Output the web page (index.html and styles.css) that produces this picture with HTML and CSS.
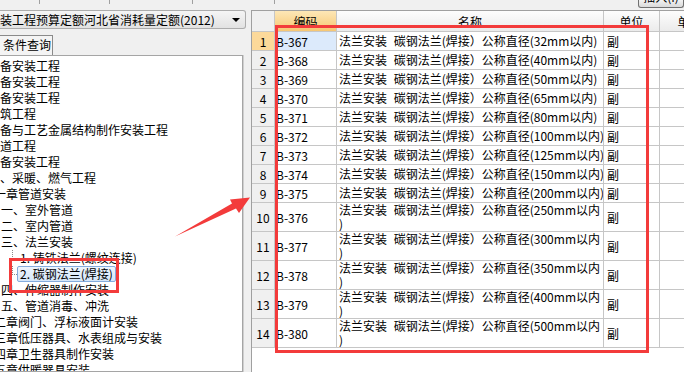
FILE: index.html
```html
<!DOCTYPE html>
<html lang="zh-CN">
<head>
<meta charset="UTF-8">
<title>定额查询</title>
<link rel="stylesheet" href="styles.css">
</head>
<body>
<div class="app">
    <div class="side">
        <div class="side-top">
            <i class="sep sep1"></i><i class="sep sep2"></i><i class="sep sep3"></i>
        </div>
        <div class="combo">
            <span class="combo-text">装工程预算定额河北省消耗量定额(2012)</span>
            <span class="combo-arrow"></span>
        </div>
        <div class="tabs"><span class="tab">条件查询</span></div>
        <div class="tree">
            <div class="node n0">备安装工程</div>
            <div class="node n0">备安装工程</div>
            <div class="node n0">备安装工程</div>
            <div class="node n0">筑工程</div>
            <div class="node n0">备与工艺金属结构制作安装工程</div>
            <div class="node n0">道工程</div>
            <div class="node n0">备安装工程</div>
            <div class="node n0">、采暖、燃气工程</div>
            <div class="node n1">一章管道安装</div>
            <div class="node n2">一、室外管道</div>
            <div class="node n2">二、室内管道</div>
            <div class="node n2">三、法兰安装</div>
            <div class="node n3"><span class="twig"></span><span class="label">1. 铸铁法兰(螺纹连接)</span></div>
            <div class="node n3"><span class="twig"></span><span class="label selected">2. 碳钢法兰(焊接)</span></div>
            <div class="node n2">四、伸缩器制作安装</div>
            <div class="node n2">五、管道消毒、冲洗</div>
            <div class="node n1">二章阀门、浮标液面计安装</div>
            <div class="node n1">三章低压器具、水表组成与安装</div>
            <div class="node n1">四章卫生器具制作安装</div>
            <div class="node n1">五章供暖器具安装</div>
        </div>
    </div>
    <div class="splitter"></div>
    <div class="main">
        <div class="main-top">
            <i class="sep"></i>
            <span class="insert-btn"><span>插入(I)</span></span>
        </div>
        <div class="grid">
            <div class="row head">
                <div class="c num"></div>
                <div class="c active">编码</div>
                <div class="c">名称</div>
                <div class="c">单位</div>
                <div class="c">单价</div>
            </div>
            <div class="row cur">
                <div class="c num">1</div><div class="c code">B-367</div>
                <div class="c name">法兰安装 碳钢法兰(焊接）公称直径(32mm以内)</div>
                <div class="c unit">副</div><div class="c"></div>
            </div>
            <div class="row">
                <div class="c num">2</div><div class="c code">B-368</div>
                <div class="c name">法兰安装 碳钢法兰(焊接）公称直径(40mm以内)</div>
                <div class="c unit">副</div><div class="c"></div>
            </div>
            <div class="row">
                <div class="c num">3</div><div class="c code">B-369</div>
                <div class="c name">法兰安装 碳钢法兰(焊接）公称直径(50mm以内)</div>
                <div class="c unit">副</div><div class="c"></div>
            </div>
            <div class="row">
                <div class="c num">4</div><div class="c code">B-370</div>
                <div class="c name">法兰安装 碳钢法兰(焊接）公称直径(65mm以内)</div>
                <div class="c unit">副</div><div class="c"></div>
            </div>
            <div class="row">
                <div class="c num">5</div><div class="c code">B-371</div>
                <div class="c name">法兰安装 碳钢法兰(焊接）公称直径(80mm以内)</div>
                <div class="c unit">副</div><div class="c"></div>
            </div>
            <div class="row">
                <div class="c num">6</div><div class="c code">B-372</div>
                <div class="c name">法兰安装 碳钢法兰(焊接）公称直径(100mm以内)</div>
                <div class="c unit">副</div><div class="c"></div>
            </div>
            <div class="row">
                <div class="c num">7</div><div class="c code">B-373</div>
                <div class="c name">法兰安装 碳钢法兰(焊接）公称直径(125mm以内)</div>
                <div class="c unit">副</div><div class="c"></div>
            </div>
            <div class="row">
                <div class="c num">8</div><div class="c code">B-374</div>
                <div class="c name">法兰安装 碳钢法兰(焊接）公称直径(150mm以内)</div>
                <div class="c unit">副</div><div class="c"></div>
            </div>
            <div class="row">
                <div class="c num">9</div><div class="c code">B-375</div>
                <div class="c name">法兰安装 碳钢法兰(焊接）公称直径(200mm以内)</div>
                <div class="c unit">副</div><div class="c"></div>
            </div>
            <div class="row tall">
                <div class="c num">10</div><div class="c code">B-376</div>
                <div class="c name">法兰安装 碳钢法兰(焊接）公称直径(250mm以内<br>)</div>
                <div class="c unit">副</div><div class="c"></div>
            </div>
            <div class="row tall">
                <div class="c num">11</div><div class="c code">B-377</div>
                <div class="c name">法兰安装 碳钢法兰(焊接）公称直径(300mm以内<br>)</div>
                <div class="c unit">副</div><div class="c"></div>
            </div>
            <div class="row tall">
                <div class="c num">12</div><div class="c code">B-378</div>
                <div class="c name">法兰安装 碳钢法兰(焊接）公称直径(350mm以内<br>)</div>
                <div class="c unit">副</div><div class="c"></div>
            </div>
            <div class="row tall">
                <div class="c num">13</div><div class="c code">B-379</div>
                <div class="c name">法兰安装 碳钢法兰(焊接）公称直径(400mm以内<br>)</div>
                <div class="c unit">副</div><div class="c"></div>
            </div>
            <div class="row tall">
                <div class="c num">14</div><div class="c code">B-380</div>
                <div class="c name">法兰安装 碳钢法兰(焊接）公称直径(500mm以内<br>)</div>
                <div class="c unit">副</div><div class="c"></div>
            </div>
        </div>
    </div>
</div>

<!-- red annotations drawn over the screenshot -->
<div class="mark mark-grid"></div>
<div class="mark mark-node"></div>
<svg class="arrow" width="684" height="372" viewBox="0 0 684 372">
    <polygon points="175,236.5 232,203.5 230,199.5 250,197.5 239,213 236,208.5" fill="#f33b3b"/>
</svg>
</body>
</html>
```

FILE: styles.css
```css
body {
    margin: 0;
    width: 684px;
    height: 372px;
    overflow: hidden;
    position: relative;
    background-color: #f0f0f0;
    font-family: "Noto Sans CJK SC", sans-serif;
    font-size: 12px;
    color: #000;
}

.app {
    display: flex;
    height: 372px;
}

/* left side: combo, tab and tree */
.side {
    width: 247px;
    flex: none;
    display: flex;
    flex-direction: column;
}

.side-top {
    height: 10px;
    display: flex;
}

.sep {
    height: 4px;
    flex: none;
    border-right: 1px solid #a0a0a0;
}

.sep1 { width: 39px; }
.sep2 { width: 69px; }
.sep3 { width: 82px; }

.combo {
    height: 19px;
    box-sizing: border-box;
    margin-right: 1px;
    border: 1px solid #acacac;
    border-left: none;
    border-radius: 0 3px 3px 0;
    background: linear-gradient(#f5f5f5, #e2e2e2);
    display: flex;
    align-items: center;
    justify-content: space-between;
    padding-right: 5px;
    line-height: 17px;
}

.combo-arrow {
    width: 0;
    height: 0;
    border-left: 4px solid transparent;
    border-right: 4px solid transparent;
    border-top: 4px solid #000;
}

.tabs {
    margin-top: 6px;
    height: 20px;
    display: flex;
}

.tab {
    box-sizing: border-box;
    height: 20px;
    width: 54px;
    margin-left: -1px;
    padding-left: 3px;
    border: 1px solid #8a8a8a;
    border-bottom: none;
    background-color: #f4f4f4;
    line-height: 18px;
}

.tree {
    flex: 1;
    margin-left: -1px;
    margin-right: 4px;
    padding-top: 2px;
    background-color: #fff;
    border: 1px solid #a5a5a5;
    box-shadow: 1px 0 0 #cfcfcf;
    overflow: hidden;
}

.node {
    height: 16px;
    line-height: 16px;
    white-space: nowrap;
}

.n0 { padding-left: 0; }
.n1 { text-indent: -6px; }
.n2 { padding-left: 1px; }

.n3 {
    display: flex;
    padding-left: 12px;
}

.twig {
    width: 4px;
    height: 8px;
    flex: none;
    border-left: 1px dotted #8c8c8c;
    border-bottom: 1px dotted #8c8c8c;
}

.label {
    height: 16px;
    box-sizing: border-box;
    padding: 0 2px;
    border: 1px solid transparent;
    line-height: 14px;
}

.label.selected {
    background: linear-gradient(#eef5fd, #d5e6f9);
    border-color: #84acdd;
    border-radius: 2px;
}

.splitter {
    width: 4px;
    flex: none;
}

/* right side: quota grid */
.main {
    flex: 1;
    min-width: 0;
    display: flex;
    flex-direction: column;
}

.main-top {
    height: 10px;
    display: flex;
    align-items: flex-start;
}

.main-top .sep {
    width: 23px;
}

.insert-btn {
    margin-left: auto;
    width: 46px;
    height: 8px;
    box-sizing: border-box;
    border: 1px solid #707070;
    border-top: none;
    border-radius: 0 0 3px 3px;
    background: linear-gradient(#f2f2f2, #dadada);
    overflow: hidden;
    text-align: center;
}

.insert-btn span {
    display: block;
    margin-top: -11px;
    line-height: 16px;
}

.grid {
    flex: 1;
    background-color: #fff;
    border-top: 1px solid #a0a0a0;
    border-left: 1px solid #a0a0a0;
    overflow: hidden;
}

.row {
    display: grid;
    grid-template-columns: 23px 62px 267px 56px 60px;
    height: 19px;
}

.row.head { height: 21px; }
.row.tall { height: 29px; }

.c {
    box-sizing: border-box;
    display: flex;
    align-items: center;
    border-right: 1px solid #c6c6c6;
    border-bottom: 1px solid #c6c6c6;
    overflow: hidden;
    white-space: nowrap;
}

.num {
    justify-content: center;
    background-color: #f0f0f0;
}

.head .c {
    justify-content: center;
    background: linear-gradient(#fdfdfd, #ebebeb);
}

.head .num {
    background: #f0f0f0;
}

.head .active {
    background: linear-gradient(#fde7b6, #f6c773);
}

.row.cur .num { background-color: #fcd99a; }
.row.cur .code { background-color: #dceafb; }

.code { padding-left: 1px; }

.name {
    padding-left: 2px;
    line-height: 14px;
    word-spacing: 4px;
}

.unit { padding-left: 3px; }

/* annotations */
.mark {
    position: absolute;
    box-sizing: border-box;
    border: 3px solid #f33b3b;
}

.mark-grid {
    left: 275px;
    top: 25px;
    width: 374px;
    height: 328px;
}

.mark-node {
    left: 9px;
    top: 258px;
    width: 110px;
    height: 35px;
}

.arrow {
    position: absolute;
    left: 0;
    top: 0;
}
```
